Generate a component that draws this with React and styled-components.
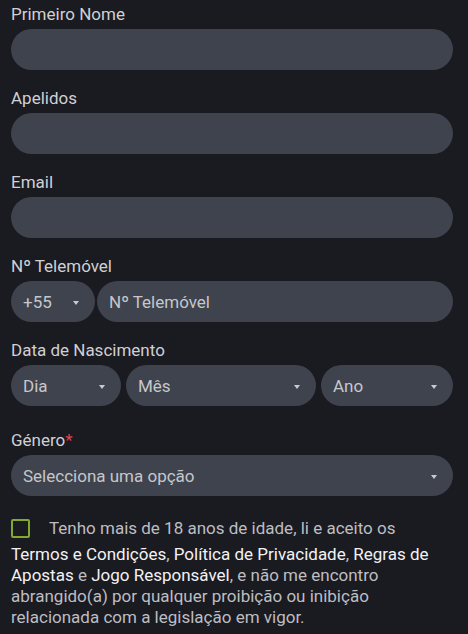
import React from 'react'
import styled, { createGlobalStyle } from 'styled-components'

const GlobalStyle = createGlobalStyle`
  html, body {
    margin: 0;
    background: #1a1a21;
  }
  body {
    font-family: Roboto, "Noto Sans", "Liberation Sans", sans-serif;
  }
`;

// Form wrapper
const Form = styled.div`
  box-sizing: border-box;
  width: 468px;
  height: 634px;
  padding: 4px 15px 0 11px;
  background: #1a1a21;
  overflow: hidden;
`;

const Field = styled.div`
  margin-bottom: ${p => p.$gap ?? 18}px;
`;

const Label = styled.div`
  font-size: 17px;
  line-height: 20px;
  color: #d0d0d3;
  margin-bottom: 5px;
`;

const Required = styled.span`
  color: #e4404a;
`;

const Row = styled.div`
  display: flex;
  gap: ${p => p.$gap}px;
`;

const Input = styled.div`
  box-sizing: border-box;
  height: 41px;
  border-radius: 21px;
  background: #3f434e;
  padding: 0 16px 0 12px;
  display: flex;
  align-items: center;
  justify-content: space-between;
  font-size: 17px;
  color: #c6c7cb;
  flex: ${p => (p.$width ? `0 0 ${p.$width}px` : '1')};
`;

const Caret = styled.span`
  width: 0;
  height: 0;
  border-left: 3.5px solid transparent;
  border-right: 3.5px solid transparent;
  border-top: 4px solid #c9cacd;
  margin-top: 2px;
`;

const Consent = styled.div`
  font-size: 17px;
  line-height: 21px;
  color: #bdbec2;
`;

const CheckRow = styled.div`
  display: flex;
  align-items: flex-start;
  gap: 19px;
  height: 26px;
`;

const Checkbox = styled.span`
  box-sizing: border-box;
  flex: 0 0 19px;
  width: 19px;
  height: 19px;
  margin-top: 1px;
  border: 2px solid #82a832;
  border-radius: 2px;
`;

const Link = styled.span`
  color: #f2f2f4;
`;

function Select({ children, width }) {
  return (
    <Input $width={width}>
      <span>{children}</span>
      <Caret />
    </Input>
  )
}

export default function App() {
  return (
    <>
      <GlobalStyle />
      <Form>
        <Field>
          <Label>Primeiro Nome</Label>
          <Input />
        </Field>
        <Field>
          <Label>Apelidos</Label>
          <Input />
        </Field>
        <Field>
          <Label>Email</Label>
          <Input />
        </Field>
        <Field>
          <Label>Nº Telemóvel</Label>
          <Row $gap={2}>
            <Select width={84}>+55</Select>
            <Input>Nº Telemóvel</Input>
          </Row>
        </Field>
        <Field $gap={24}>
          <Label>Data de Nascimento</Label>
          <Row $gap={5}>
            <Select width={110}>Dia</Select>
            <Select width={190}>Mês</Select>
            <Select>Ano</Select>
          </Row>
        </Field>
        <Field $gap={22}>
          <Label>Género<Required>*</Required></Label>
          <Select>Selecciona uma opção</Select>
        </Field>
        <Consent>
          <CheckRow>
            <Checkbox />
            <span>Tenho mais de 18 anos de idade, li e aceito os</span>
          </CheckRow>
          <Link>Termos e Condições</Link>, <Link>Política de Privacidade</Link>,{' '}
          <Link>Regras de Apostas</Link> e <Link>Jogo Responsável</Link>, e não me encontro
          abrangido(a) por qualquer proibição ou inibição relacionada com a legislação em vigor.
        </Consent>
      </Form>
    </>
  )
}
